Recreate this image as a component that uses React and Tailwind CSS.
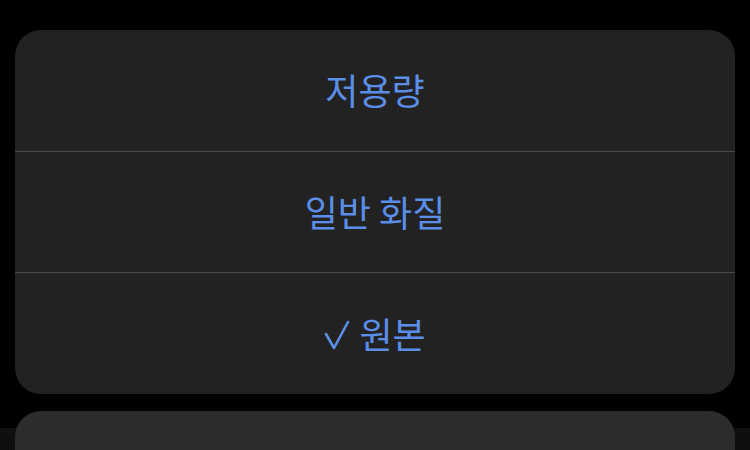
export default function App() {
  const font = { fontFamily: '"Noto Sans CJK KR", "Noto Sans", sans-serif' };
  return (
    <div className="relative w-[750px] h-[450px] overflow-hidden bg-black" style={font}>
      <div className="absolute left-0 right-0 top-[428px] bottom-0 bg-[#0f0f11]" />
      <div className="relative flex flex-col gap-[17px] px-[15px] pt-[30px]">
        <div className="flex h-[364px] flex-col overflow-hidden rounded-[26px] bg-[#222222]">
          <div className="flex flex-1 items-center justify-center pb-[2px] text-[36px] text-[#5b8ee8]">
            저용량
          </div>
          <div className="h-px bg-[#4b4b4b]" />
          <div className="flex flex-1 items-center justify-center pb-[2px] text-[36px] text-[#5b8ee8]">
            일반 화질
          </div>
          <div className="h-px bg-[#4b4b4b]" />
          <div className="flex flex-1 items-center justify-center gap-[9px] pb-[2px] text-[36px] text-[#5b8ee8]">
            <svg width="26" height="32" viewBox="0 0 26 32" className="mt-[4px]">
              <path d="M2 15 L10 29 L24 3" fill="none" stroke="#5b8ee8" strokeWidth="2.6" strokeLinecap="round" strokeLinejoin="round" />
            </svg>
            <span>원본</span>
          </div>
        </div>
        <div className="h-[80px] rounded-[26px] bg-[#2c2c2e]" />
      </div>
    </div>
  );
}
